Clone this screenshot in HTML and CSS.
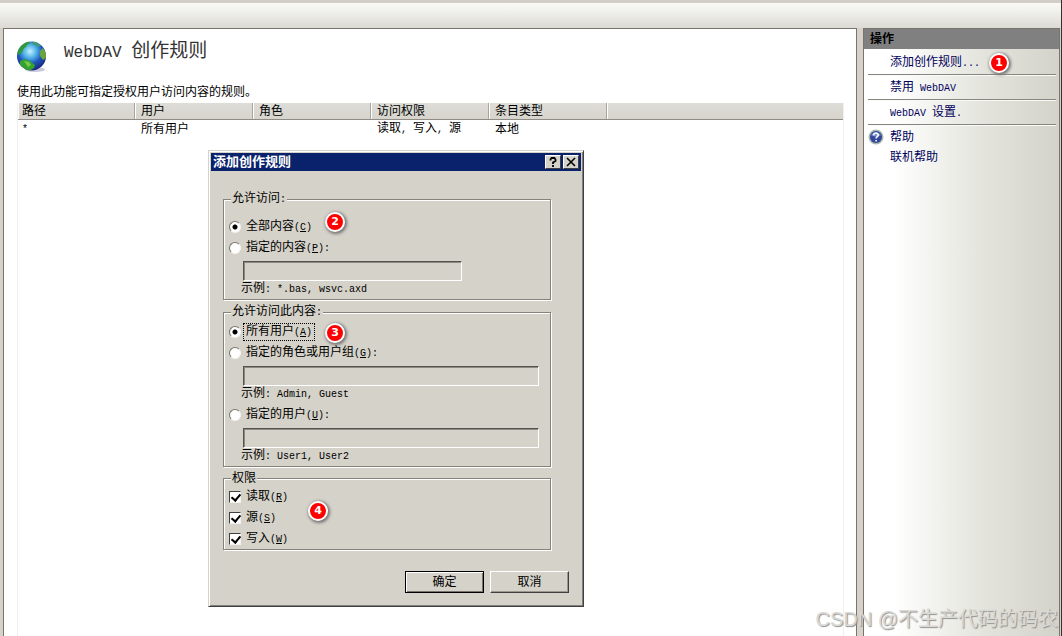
FILE: index.html
```html
<!DOCTYPE html>
<html lang="zh-CN">
<head>
<meta charset="utf-8">
<title>WebDAV 创作规则</title>
<link rel="stylesheet" href="styles.css">
</head>
<body>
<div class="toolbar"></div>
<div class="workspace">
  <main class="page">
    <header class="page-head">
      <svg class="globe" viewBox="0 0 32 32" aria-hidden="true">
        <defs>
          <radialGradient id="sea" cx="45%" cy="34%" r="65%">
            <stop offset="0" stop-color="#c4f2ff"/>
            <stop offset=".35" stop-color="#4fb0e6"/>
            <stop offset=".65" stop-color="#1e55bd"/>
            <stop offset="1" stop-color="#1b2a7c"/>
          </radialGradient>
          <clipPath id="ball"><circle cx="14.500" cy="15" r="14.500"/></clipPath>
        </defs>
        <ellipse cx="18" cy="28.500" rx="10" ry="2.500" fill="#c9c9dd"/>
        <circle cx="14.500" cy="15" r="14.500" fill="url(#sea)"/>
        <g clip-path="url(#ball)">
          <path d="M0 12 2 7 6 2l6-2 1 2-3 2-1 2-2 1-2 4-3 3z" fill="#2f9a35"/>
          <path d="M15 0l6 2 3 3-3 1-3-2-2 0z" fill="#3f9b78"/>
          <path d="M23 10l3-3 3 5v5l-3 2-3-4z" fill="#6ba33c"/>
          <path d="M3 20l5-2 5 2 5 4-1 3-5 3-5-2-4-4z" fill="#35a32f"/>
          <path d="M7 20l5 1 2 3-3 2z" fill="#7bc94c"/>
        </g>
      </svg>
      <h1 class="page-title"><span class="latin-lg">WebDAV </span>创作规则</h1>
    </header>
    <p class="intro">使用此功能可指定授权用户访问内容的规则。</p>
    <div class="list">
      <table class="rules">
        <colgroup><col class="first"><col class="c"><col class="c"><col class="c"><col class="c"><col></colgroup>
        <thead><tr><th>路径</th><th>用户</th><th>角色</th><th>访问权限</th><th>条目类型</th><th></th></tr></thead>
        <tbody><tr><td><span class="latin">*</span></td><td>所有用户</td><td></td><td>读取<span class="latin">, </span>写入<span class="latin">, </span>源</td><td>本地</td><td></td></tr></tbody>
      </table>
    </div>
  </main>
  <aside class="actions">
    <h2 class="actions-title">操作</h2>
    <ul class="action-list">
      <li class="ruled"><a href="#">添加创作规则<span class="latin">...</span></a><span class="badge">1</span></li>
      <li class="ruled"><a href="#">禁用<span class="latin"> WebDAV</span></a></li>
      <li class="ruled"><a href="#"><span class="latin">WebDAV </span>设置<span class="latin">.</span></a></li>
      <li class="help">
        <svg class="help-icon" viewBox="0 0 16 16" aria-hidden="true">
          <circle cx="8" cy="8" r="7.500" fill="#a9b7ae"/>
          <circle cx="8" cy="8" r="6" fill="#31489a"/>
          <path d="M3 6a6 5 0 0 1 10 0Q8 9 3 6z" fill="#7896cf"/>
          <path d="M5.700 6.300C5.700 3.300 10.300 3.400 10.300 6.100 10.300 7.800 8.100 7.700 8.100 9.600M8.100 11v1.500" fill="none" stroke="#fff" stroke-width="1.600"/>
        </svg>
        <a href="#">帮助</a></li>
      <li class="sub"><a href="#">联机帮助</a></li>
    </ul>
  </aside>
</div>

<form class="dialog" role="dialog" aria-labelledby="dlg-title">
  <div class="titlebar">
    <h2 class="dlg-title" id="dlg-title">添加创作规则</h2>
    <button type="button" class="tb-btn" aria-label="帮助"><svg viewBox="0 0 12 10"><path d="M3.500 3.500V2.500L4.500 1H7.500L8.500 2.500V4L6 5.500V7M6 8v2" fill="none" stroke="#000" stroke-width="1.800"/></svg></button>
    <button type="button" class="tb-btn" aria-label="关闭"><svg viewBox="0 0 12 10"><path d="M2 1l8 8M10 1L2 9" fill="none" stroke="#000" stroke-width="1.600"/></svg></button>
  </div>
  <div class="dlg-body">
    <fieldset class="group content">
      <legend>允许访问<span class="latin">:</span></legend>
      <div class="option"><input type="radio" name="content" id="c-all" checked><label for="c-all">全部内容<span class="latin">(<u>C</u>)</span></label><span class="badge">2</span></div>
      <div class="option"><input type="radio" name="content" id="c-some"><label for="c-some">指定的内容<span class="latin">(<u>P</u>):</span></label></div>
      <input type="text" class="field short" aria-labelledby="c-hint" disabled>
      <p class="hint" id="c-hint">示例<span class="latin">: *.bas, wsvc.axd</span></p>
    </fieldset>
    <fieldset class="group">
      <legend>允许访问此内容<span class="latin">:</span></legend>
      <div class="option"><input type="radio" name="who" id="w-all" checked><label for="w-all" class="focused">所有用户<span class="latin">(<u>A</u>)</span></label><span class="badge">3</span></div>
      <div class="option"><input type="radio" name="who" id="w-role"><label for="w-role">指定的角色或用户组<span class="latin">(<u>G</u>):</span></label></div>
      <input type="text" class="field" aria-labelledby="r-hint" disabled>
      <p class="hint" id="r-hint">示例<span class="latin">: Admin, Guest</span></p>
      <div class="option spaced"><input type="radio" name="who" id="w-user"><label for="w-user">指定的用户<span class="latin">(<u>U</u>):</span></label></div>
      <input type="text" class="field" aria-labelledby="u-hint" disabled>
      <p class="hint" id="u-hint">示例<span class="latin">: User1, User2</span></p>
    </fieldset>
    <fieldset class="group perms">
      <legend>权限</legend>
      <div class="option"><input type="checkbox" id="p-r" checked><label for="p-r">读取<span class="latin">(<u>R</u>)</span></label></div>
      <div class="option"><input type="checkbox" id="p-s" checked><label for="p-s">源<span class="latin">(<u>S</u>)</span></label></div>
      <div class="option"><input type="checkbox" id="p-w" checked><label for="p-w">写入<span class="latin">(<u>W</u>)</span></label></div>
      <span class="badge">4</span>
    </fieldset>
    <div class="buttons">
      <button type="submit" class="btn default">确定</button>
      <button type="button" class="btn">取消</button>
    </div>
  </div>
</form>
<div class="watermark">CSDN @不生产代码的码农</div>
</body>
</html>
```
FILE: styles.css
```css
* { box-sizing: border-box; }
html { height: 100%; }
body {
  margin: 0;
  min-height: 100%;
  display: flex;
  flex-direction: column;
  position: relative;
  overflow: hidden;
  background: #d6d2ca;
  color: #000;
  font: 12px/16px "Liberation Sans", "Noto Sans CJK SC", sans-serif;
  border-right: 1px solid #333;
}
h1, h2, p, ul { margin: 0; padding: 0; font-weight: normal; }
.latin { font-family: "Liberation Mono", monospace; font-size: 10px; white-space: pre; }

.toolbar {
  height: 28px;
  border-top: 3px solid #d2cec6;
  background: linear-gradient(#f9f9f5, #f0f0ec 35%, #dcdad3);
}
.workspace { flex: 1; display: flex; gap: 6px; padding: 0 1px 0 3px; }

.page {
  flex: 1;
  display: flex;
  flex-direction: column;
  padding: 12px 12px 0 13px;
  background: #fff;
  border: 1px solid #77736d;
  border-bottom: 0;
}
.page-head { display: flex; gap: 15px; height: 43px; }
.globe { width: 32px; height: 32px; }
.page-title {
  font-family: "Liberation Mono", "Noto Sans CJK SC", monospace;
  font-size: 19px;
  line-height: 22px;
  color: #333;
}
.latin-lg { font-size: 16px; white-space: pre; }
.intro { height: 19px; }
.list { flex: 1; border: 1px solid #efefec; border-top: 0; border-bottom: 0; }
.rules { width: 100%; table-layout: fixed; border-collapse: separate; border-spacing: 0; }
.rules .first { width: 117px; }
.rules .c { width: 118px; }
.rules th, .rules td { height: 16px; padding: 0 0 0 6px; text-align: left; font-weight: normal; white-space: nowrap; }
.rules th { padding-top: 1px; line-height: 15px; background: linear-gradient(#dddcd7, #d6d4cd); border-bottom: 1px solid #8f8c85; box-shadow: inset 1px 0 #fff, inset -1px 0 #aaa69e; }
.rules th:first-child, .rules td:first-child { padding-left: 4px; }
.rules th:last-child { box-shadow: inset 1px 0 #fff; }
.rules td { height: 18px; }

.actions {
  width: 197px;
  border: 1px solid #77736d;
  border-bottom: 0;
  background: linear-gradient(90deg, #fff 15%, #f1f1ed 38%, #e2e2db 65%, #d4d3ca);
}
.actions-title { height: 20px; padding-left: 6px; background: #818080; font-size: 12px; font-weight: bold; line-height: 20px; }
.action-list { list-style: none; padding: 1px 3px 0 4px; }
.action-list a { color: #00005a; text-decoration: none; }
.action-list li { position: relative; padding-left: 22px; }
.action-list .ruled { height: 25px; line-height: 25px; border-bottom: 1px solid #85867f; box-shadow: 0 1px #fafaf7; }
.action-list .help { display: flex; align-items: center; gap: 6px; height: 24px; padding-left: 0; }
.help-icon { width: 16px; height: 16px; }

.badge {
  position: absolute;
  width: 20px;
  height: 20px;
  border: 2px solid #fff;
  border-radius: 50%;
  background: #f00;
  box-shadow: 1px 1px 3px 1px #777;
  color: #fff;
  font: bold 11px/16px "DejaVu Sans", sans-serif;
  text-align: center;
}
.actions .badge { left: 121px; top: 3px; }

.dialog {
  position: absolute;
  left: 208px;
  top: 150px;
  width: 376px;
  padding: 2px;
  background: #d5d2c9;
  border: 1px solid;
  border-color: #d5d2c9 #404040 #404040 #d5d2c9;
  box-shadow: inset 1px 1px #fff, inset -1px -1px #808080;
}
.titlebar { display: flex; align-items: center; height: 18px; padding: 0 2px; background: #0a216b; }
.dlg-title { flex: 1; color: #fff; font-size: 13px; font-weight: bold; line-height: 18px; }
.tb-btn {
  width: 16px;
  height: 14px;
  padding: 1px;
  background: #d5d2c9;
  border: 1px solid;
  border-color: #fff #404040 #404040 #fff;
}
.tb-btn + .tb-btn { margin-left: 2px; }
.tb-btn svg { display: block; width: 12px; height: 10px; }
.dlg-body { padding: 19px 30px 11px 12px; }
.group {
  position: relative;
  display: block;
  min-width: 0;
  margin: 0 0 3px;
  padding: 0 5px 4px;
  border: 1px solid #85827c;
  box-shadow: 1px 1px #fff, inset 1px 1px #fff;
}
.content { padding-top: 8px; }
.group legend { margin-left: 2px; padding: 0 1px; background: #d5d2c9; }
.option { position: relative; display: flex; align-items: center; height: 21px; }
.spaced { margin-top: 4px; }
.option input {
  appearance: none;
  flex: none;
  width: 12px;
  height: 12px;
  margin: 0 2px 0 0;
  background: #fff;
  border: 1px solid;
  border-color: #77746e #f4f3f0 #f4f3f0 #77746e;
}
.option input[type="radio"] { border-radius: 50%; }
.option input[type="radio"]:checked { background: radial-gradient(circle, #000 2px, #fff 3px); }
.option input[type="checkbox"] { border-color: #404040 #f4f3f0 #f4f3f0 #404040; }
.option input[type="checkbox"]:checked::before {
  content: "";
  display: block;
  width: 4px;
  height: 7px;
  margin: 0 0 0 3px;
  border: solid #000;
  border-width: 0 2px 2px 0;
  transform: rotate(40deg);
}
.option label { padding: 0 2px; border: 1px solid transparent; line-height: 14px; white-space: nowrap; }
.option .focused { border: 1px dotted #000; }
.option .badge { left: 96px; top: -4px; }
.option .focused + .badge { top: 2px; }
.perms .badge { left: 84px; top: 15px; }
.field {
  display: block;
  width: 296px;
  height: 20px;
  margin: 3px 0 0 14px;
  padding: 0 3px;
  background: #d5d2c9;
  border: 1px solid;
  border-color: #55524c #fff #fff #55524c;
  box-shadow: inset 1px 1px #8d8a84;
}
.short { width: 219px; }
.hint { height: 14px; padding-left: 12px; line-height: 14px; }
.perms { margin: 0; padding-bottom: 0; }
.buttons { display: flex; justify-content: flex-end; gap: 6px; margin: 21px -18px 0 0; }
.btn {
  width: 79px;
  height: 22px;
  padding: 0;
  background: #d5d2c9;
  border: 1px solid;
  border-color: #fff #404040 #404040 #fff;
  box-shadow: inset -1px -1px #9a978f;
  font: inherit;
}
.default { border-color: #000; box-shadow: inset 1px 1px #fff, inset -1px -1px #77746e; }

.watermark {
  position: absolute;
  right: 3px;
  bottom: 2px;
  color: #d9d9d6;
  font-size: 20px;
  line-height: 30px;
  text-shadow: 1px 1px 1px #8f8f8f;
}
```
